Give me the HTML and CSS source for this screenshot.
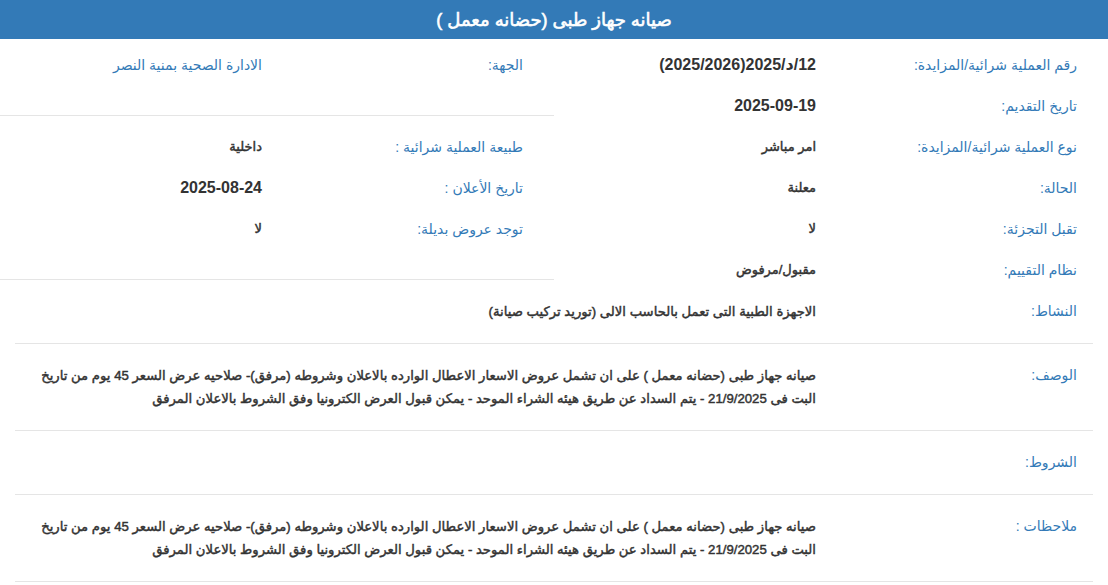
FILE: index.html
```html
<!DOCTYPE html>
<html lang="ar" dir="rtl">
<head>
<meta charset="utf-8">
<title>صيانه جهاز طبى (حضانه معمل )</title>
<link rel="stylesheet" href="styles.css">
</head>
<body>
<div class="panel">
  <div class="panel-heading">
    <h3 class="panel-title">صيانه جهاز طبى (حضانه معمل )</h3>
  </div>
  <div class="panel-body">
    <div class="top">
      <div class="col col-start">
        <div class="field"><span class="label">رقم العملية شرائية/المزايدة:</span><span class="value num">12/د/2025(2025/2026)</span></div>
        <div class="field"><span class="label">تاريخ التقديم:</span><span class="value num">2025-09-19</span></div>
        <div class="field"><span class="label">نوع العملية شرائية/المزايدة:</span><span class="value">امر مباشر</span></div>
        <div class="field"><span class="label">الحالة:</span><span class="value">معلنة</span></div>
        <div class="field"><span class="label">تقبل التجزئة:</span><span class="value">لا</span></div>
        <div class="field"><span class="label">نظام التقييم:</span><span class="value">مقبول/مرفوض</span></div>
      </div>
      <div class="col col-end">
        <div class="block block-first">
          <div class="field"><span class="label">الجهة:</span><span class="value plain">الادارة الصحية بمنية النصر</span></div>
        </div>
        <div class="block block-second">
          <div class="field"><span class="label">طبيعة العملية شرائية :</span><span class="value">داخلية</span></div>
          <div class="field"><span class="label">تاريخ الأعلان :</span><span class="value num">2025-08-24</span></div>
          <div class="field"><span class="label">توجد عروض بديلة:</span><span class="value">لا</span></div>
        </div>
      </div>
    </div>
    <div class="rows">
      <div class="row"><span class="label">النشاط:</span><span class="value">الاجهزة الطبية التى تعمل بالحاسب الالى (توريد تركيب صيانة)</span></div>
      <div class="row"><span class="label">الوصف:</span><span class="value">صيانه جهاز طبى (حضانه معمل ) على ان تشمل عروض الاسعار الاعطال الوارده بالاعلان وشروطه (مرفق)- صلاحيه عرض السعر 45 يوم من تاريخ البت فى 21/9/2025 - يتم السداد عن طريق هيئه الشراء الموحد - يمكن قبول العرض الكترونيا وفق الشروط بالاعلان المرفق</span></div>
      <div class="row"><span class="label">الشروط:</span><span class="value"></span></div>
      <div class="row"><span class="label">ملاحظات :</span><span class="value">صيانه جهاز طبى (حضانه معمل ) على ان تشمل عروض الاسعار الاعطال الوارده بالاعلان وشروطه (مرفق)- صلاحيه عرض السعر 45 يوم من تاريخ البت فى 21/9/2025 - يتم السداد عن طريق هيئه الشراء الموحد - يمكن قبول العرض الكترونيا وفق الشروط بالاعلان المرفق</span></div>
    </div>
  </div>
</div>
</body>
</html>
```

FILE: styles.css
```css
html, body {
  margin: 0;
  padding: 0;
  background: #ffffff;
}

body {
  font-family: "Liberation Sans", "DejaVu Sans", sans-serif;
  font-size: 14px;
  color: #333333;
}

.panel-heading {
  background: #337ab7;
  height: 39px;
  display: flex;
  align-items: center;
  justify-content: center;
}

.panel-title {
  margin: 0;
  color: #ffffff;
  font-size: 18px;
  font-weight: normal;
  -webkit-text-stroke: 0.6px #ffffff;
}

.top {
  display: flex;
}

.col {
  width: 50%;
}

.col-start {
  padding-top: 16px;
}

.field {
  display: flex;
  padding-right: 31px;
  height: 20px;
  line-height: 20px;
}

.field + .field {
  margin-top: 21px;
}

.label {
  flex: none;
  width: 261px;
  color: #337ab7;
}

.value {
  font-size: 13px;
  font-weight: normal;
  color: #333333;
  -webkit-text-stroke: 0.45px #333333;
}

.value.num {
  font-size: 16px;
  font-weight: bold;
  -webkit-text-stroke: 0;
}

.value.plain {
  font-size: 14px;
  color: #337ab7;
  -webkit-text-stroke: 0;
}

.block {
  border-bottom: 1px solid #e5e5e5;
}

.block-first {
  padding: 16px 0 40px;
}

.block-second {
  padding: 21px 0 40px;
}

.rows {
  padding: 0 15px;
}

.row {
  display: flex;
  align-items: flex-start;
  padding: 20px 16px 20px 15px;
  border-bottom: 1px solid #e5e5e5;
  line-height: 23px;
  min-height: 23px;
}

.row .label {
  width: 261px;
}

.row .value {
  flex: 1;
  font-size: 13.2px;
}
```
